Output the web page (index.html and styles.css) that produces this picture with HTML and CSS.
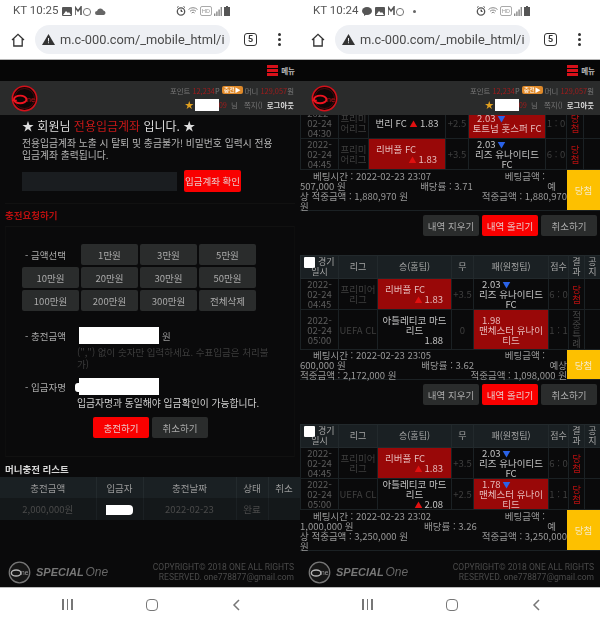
FILE: index.html
```html
<!DOCTYPE html>
<html lang="ko">
<head>
<meta charset="utf-8">
<title>Special One</title>
<link rel="stylesheet" href="styles.css">
</head>
<body>
<div class="screens">

<section class="phone">
  <header class="status">
    <span class="status-text">KT 10:25</span>
    <svg class="st-icon" width="10" height="9" viewBox="0 0 10 9"><rect width="10" height="9" rx="1" fill="#555"/><path d="M1 8l3-4 2 2 1-1 2 3z" fill="#fff"/></svg>
    <svg class="st-icon" width="17" height="10" viewBox="0 0 17 10"><path d="M0 9V1l3 4 3-4v8" fill="none" stroke="#555" stroke-width="1.6"/><circle cx="12" cy="6" r="3.6" fill="none" stroke="#777"/></svg>
    <svg class="st-icon" width="11" height="7" viewBox="0 0 11 7"><path d="M2 7a2 2 0 010-4 3.4 3.4 0 016.4-.6A2.4 2.4 0 019 7z" fill="#666"/></svg>
    <span class="status-right">
      <svg width="10" height="10" viewBox="0 0 10 10"><circle cx="5" cy="5.5" r="3.7" fill="none" stroke="#555" stroke-width="1.3"/><path d="M1 1.5L2.5.5M9 1.5L7.5.5M5 3.5v2h1.5" stroke="#555"/></svg>
      <svg width="10" height="8" viewBox="0 0 10 8"><path d="M.5 2.5a6.5 6.5 0 019 0M2 4.3a4.2 4.2 0 016 0M3.6 6a2 2 0 013 0" fill="none" stroke="#888"/></svg>
      <span class="hd">HD</span>
      <svg width="8" height="9" viewBox="0 0 8 9"><path d="M0 9h1.4V6.5H0zM2.2 9h1.4V4.5H2.2zM4.4 9h1.4V2.5H4.4zM6.6 9H8V0H6.6z" fill="#888"/></svg>
      <svg width="6" height="10" viewBox="0 0 6 10"><path d="M2 0h2v1h2v9H0V1h2z" fill="#555"/></svg>
    </span>
  </header>
  <div class="browser">
    <svg class="home" width="14" height="14" viewBox="0 0 14 14"><path d="M1 7l6-5.7L13 7M2.8 6v7h8.4V6" fill="none" stroke="#333" stroke-width="1.3"/></svg>
    <div class="url">
      <svg width="13" height="11" viewBox="0 0 13 11"><path d="M6.5 0L13 11H0z" fill="#333"/><path d="M6 4h1v3.500H6zM6 8.300h1v1H6z" fill="#eef0f4"/></svg>
      <span class="url-text">m.c-000.com/_mobile_html/i</span>
    </div>
    <span class="tabs">5</span>
    <span class="kebab"><i></i><i></i><i></i></span>
  </div>
  <main class="page">
    <div class="menubar">
      <span class="burger"><i></i><i></i><i></i></span>
      <span class="menu-text">메뉴</span>
    </div>
    <div class="userbar">
      <svg class="logo" width="27" height="27" viewBox="0 0 28 28">
        <circle cx="14" cy="14" r="12.6" fill="#120404" stroke="#d3111b" stroke-width="1.6"/>
        <circle cx="14" cy="14" r="10.4" fill="#0c0606" stroke="#5c0a10" stroke-width="0.8"/>
        <ellipse cx="9.5" cy="15" rx="6.5" ry="4" fill="none" stroke="#ee1420" stroke-width="2"/>
        <path d="M1 16h5" stroke="#ee1420" stroke-width="1.5"/>
        <text x="16" y="18" class="logo-ne">ne</text>
      </svg>
      <div class="userinfo">
        <div class="userline">포인트 <em>12,234</em>P <b class="charge">충전▶</b> 머니 <em>129,057</em>원</div>
        <div class="userline"><span class="star">★</span><span class="mask"></span><em class="uid">09</em> 님 &nbsp; 쪽지() &nbsp;<strong>로그아웃</strong></div>
      </div>
    </div>

    <div class="notice">
      <p class="notice-title">★ 회원님 <em>전용입금계좌</em> 입니다. ★</p>
      <p class="notice-text">전용입금계좌 노출 시 탈퇴 및 충금불가! 비밀번호 입력시 전용 입금계좌 출력됩니다.</p>
      <div class="account-row">
        <span class="account-input"></span>
        <span class="btn red account-btn">입금계좌 확인</span>
      </div>
    </div>

    <h2 class="section-title red-title">충전요청하기</h2>
    <div class="panel">
      <div class="amounts">
        <span class="field-label">- 금액선택</span>
        <span class="btn">1만원</span><span class="btn">3만원</span><span class="btn">5만원</span>
        <span class="btn">10만원</span><span class="btn">20만원</span><span class="btn">30만원</span><span class="btn">50만원</span>
        <span class="btn">100만원</span><span class="btn">200만원</span><span class="btn">300만원</span><span class="btn">전체삭제</span>
      </div>
      <div class="field amount-field">
        <span class="field-label">- 충전금액</span>
        <span class="white-input"></span>
        <span class="unit">원</span>
      </div>
      <p class="help">(",") 없이 숫자만 입력하세요. 수표입금은 처리불가)</p>
      <div class="field name-field">
        <span class="field-label">- 입금자명</span>
        <span class="white-input blob"></span>
      </div>
      <p class="name-note">입금자명과 동일해야 입금확인이 가능합니다.</p>
      <div class="form-actions">
        <span class="btn red">충전하기</span>
        <span class="btn">취소하기</span>
      </div>
    </div>

    <h2 class="section-title white-title">머니충전 리스트</h2>
    <table class="list">
      <colgroup><col class="l1"><col class="l2"><col class="l3"><col class="l4"><col class="l5"></colgroup>
      <thead><tr><th>충전금액</th><th>입금자</th><th>충전날짜</th><th>상태</th><th>취소</th></tr></thead>
      <tbody><tr><td>2,000,000원</td><td><span class="mask list-mask"></span></td><td>2022-02-23</td><td>완료</td><td></td></tr></tbody>
    </table>

    <footer class="foot">
      <svg class="foot-logo" width="23" height="23" viewBox="0 0 24 24">
        <circle cx="12" cy="12" r="10.7" fill="#161616" stroke="#777" stroke-width="1.3"/>
        <ellipse cx="8.5" cy="12.5" rx="5" ry="3.2" fill="none" stroke="#b5b5b5" stroke-width="1.5"/>
        <text x="13.5" y="15" class="logo-ne grey">ne</text>
      </svg>
      <span class="foot-brand">SPECIAL <i>One</i></span>
      <p class="copyright">COPYRIGHT© 2018 ONE ALL RIGHTS<br>RESERVED. one778877@gmail.com</p>
    </footer>
  </main>
  <nav class="softkeys">
    <span class="recent"><i></i><i></i><i></i></span>
    <span class="homekey"></span>
    <svg width="8" height="12" viewBox="0 0 8 12"><path d="M7 1L2 6l5 5" fill="none" stroke="#777" stroke-width="1.5"/></svg>
  </nav>
</section>

<section class="phone">
  <header class="status">
    <span class="status-text">KT 10:24</span>
    <svg class="st-icon" width="10" height="9" viewBox="0 0 10 9"><ellipse cx="5" cy="4" rx="5" ry="4" fill="#555"/><path d="M2 6v3l3-2z" fill="#555"/></svg>
    <svg class="st-icon" width="10" height="9" viewBox="0 0 10 9"><rect width="10" height="9" rx="1" fill="#555"/><path d="M1 8l3-4 2 2 1-1 2 3z" fill="#fff"/></svg>
    <svg class="st-icon" width="17" height="10" viewBox="0 0 17 10"><path d="M0 9V1l3 4 3-4v8" fill="none" stroke="#555" stroke-width="1.6"/><circle cx="12" cy="6" r="3.6" fill="none" stroke="#777"/></svg>
    <span class="dot"></span>
    <span class="status-right">
      <svg width="10" height="10" viewBox="0 0 10 10"><circle cx="5" cy="5.5" r="3.7" fill="none" stroke="#555" stroke-width="1.3"/><path d="M1 1.5L2.5.5M9 1.5L7.5.5M5 3.5v2h1.5" stroke="#555"/></svg>
      <svg width="10" height="8" viewBox="0 0 10 8"><path d="M.5 2.5a6.5 6.5 0 019 0M2 4.3a4.2 4.2 0 016 0M3.6 6a2 2 0 013 0" fill="none" stroke="#888"/></svg>
      <span class="hd">HD</span>
      <svg width="8" height="9" viewBox="0 0 8 9"><path d="M0 9h1.4V6.5H0zM2.2 9h1.4V4.5H2.2zM4.4 9h1.4V2.5H4.4zM6.6 9H8V0H6.6z" fill="#888"/></svg>
      <svg width="6" height="10" viewBox="0 0 6 10"><path d="M2 0h2v1h2v9H0V1h2z" fill="#555"/></svg>
    </span>
  </header>
  <div class="browser">
    <svg class="home" width="14" height="14" viewBox="0 0 14 14"><path d="M1 7l6-5.7L13 7M2.8 6v7h8.4V6" fill="none" stroke="#333" stroke-width="1.3"/></svg>
    <div class="url">
      <svg width="13" height="11" viewBox="0 0 13 11"><path d="M6.5 0L13 11H0z" fill="#333"/><path d="M6 4h1v3.500H6zM6 8.300h1v1H6z" fill="#eef0f4"/></svg>
      <span class="url-text">m.c-000.com/_mobile_html/i</span>
    </div>
    <span class="tabs">5</span>
    <span class="kebab"><i></i><i></i><i></i></span>
  </div>
  <main class="page">
    <div class="menubar">
      <span class="burger"><i></i><i></i><i></i></span>
      <span class="menu-text">메뉴</span>
    </div>
    <div class="userbar">
      <svg class="logo" width="27" height="27" viewBox="0 0 28 28">
        <circle cx="14" cy="14" r="12.6" fill="#120404" stroke="#d3111b" stroke-width="1.6"/>
        <circle cx="14" cy="14" r="10.4" fill="#0c0606" stroke="#5c0a10" stroke-width="0.8"/>
        <ellipse cx="9.5" cy="15" rx="6.5" ry="4" fill="none" stroke="#ee1420" stroke-width="2"/>
        <path d="M1 16h5" stroke="#ee1420" stroke-width="1.5"/>
        <text x="16" y="18" class="logo-ne">ne</text>
      </svg>
      <div class="userinfo">
        <div class="userline">포인트 <em>12,234</em>P <b class="charge">충전▶</b> 머니 <em>129,057</em>원</div>
        <div class="userline"><span class="star">★</span><span class="mask"></span><em class="uid">09</em> 님 &nbsp; 쪽지() &nbsp;<strong>로그아웃</strong></div>
      </div>
    </div>

    <div class="history">
      <table class="bets clipped">
        <colgroup><col class="c-date"><col class="c-lg-s"><col class="c-home-s"><col class="c-draw-s"><col class="c-away-s"><col class="c-score"><col class="c-res-s"><col class="c-not-s"></colgroup>
        <tbody>
          <tr class="r31">
            <td class="date">2022-<br>02-24<br>04:30</td><td class="league">프리미<br>어리그</td>
            <td class="team">번리 FC <span class="up">▲</span> 1.83</td><td class="draw">+2.5</td>
            <td class="team win"><span class="odds-line">2.03 <span class="down">▼</span></span><br>토트넘 홋스퍼 FC</td><td class="score">1 : 0</td><td class="result">당<br>첨</td><td></td>
          </tr>
          <tr class="r31">
            <td class="date">2022-<br>02-24<br>04:45</td><td class="league">프리미<br>어리그</td>
            <td class="team win"><span class="home-name">리버풀 FC</span><span class="home-odds"><span class="up">▲</span> 1.83</span></td><td class="draw">+3.5</td>
            <td class="team"><span class="odds-line">2.03 <span class="down">▼</span></span><br>리즈 유나이티드<br>FC</td><td class="score">6 : 0</td><td class="result">당<br>첨</td><td></td>
          </tr>
        </tbody>
      </table>
      <div class="info info4">
        <div class="info-text">
          <div class="info-line pad-r"><span class="indent">베팅시간 : 2022-02-23 23:07</span><span>베팅금액 :</span></div>
          <div class="info-line pad-s"><span>507,000 원</span><span>배당률 : 3.71</span><span>예</span></div>
          <div class="info-line"><span>상 적중금액 : 1,880,970 원</span><span>적중금액 : 1,880,970</span></div>
          <div class="info-line"><span>원</span></div>
        </div>
        <span class="won">당첨</span>
      </div>
      <div class="actions">
        <span class="btn">내역 지우기</span><span class="btn red">내역 올리기</span><span class="btn">취소하기</span>
      </div>

      <table class="bets">
        <colgroup><col class="c-date"><col class="c-lg"><col class="c-home"><col class="c-draw"><col class="c-away"><col class="c-score-n"><col class="c-res"><col class="c-not"></colgroup>
        <thead>
          <tr class="r23"><th class="first-th"><span class="check"></span> 경기<br>일시</th><th>리그</th><th>승(홈팀)</th><th>무</th><th>패(원정팀)</th><th>점수</th><th>결<br>과</th><th>공<br>지</th></tr>
        </thead>
        <tbody>
          <tr class="r31">
            <td class="date">2022-<br>02-24<br>04:45</td><td class="league">프리미어<br>리그</td>
            <td class="team win"><span class="home-name">리버풀 FC</span><span class="home-odds"><span class="up">▲</span> 1.83</span></td><td class="draw">+3.5</td>
            <td class="team"><span class="odds-line">2.03 <span class="down">▼</span></span><br>리즈 유나이티드<br>FC</td><td class="score">6 : 0</td><td class="result">당<br>첨</td><td></td>
          </tr>
          <tr class="r40">
            <td class="date">2022-<br>02-24<br>05:00</td><td class="league">UEFA CL</td>
            <td class="team">아틀레티코 마드<br>리드<span class="home-odds">1.88</span></td><td class="draw">0</td>
            <td class="team win"><span class="odds-line">1.98</span><br>맨체스터 유나이<br>티드</td><td class="score">1 : 1</td><td class="result"><span class="dim">적<br>중<br>특<br>례</span></td><td></td>
          </tr>
        </tbody>
      </table>
      <div class="info info3">
        <div class="info-text">
          <div class="info-line pad-r"><span class="indent">베팅시간 : 2022-02-23 23:05</span><span>베팅금액 :</span></div>
          <div class="info-line"><span>600,000 원</span><span>배당률 : 3.62</span><span>예상</span></div>
          <div class="info-line"><span>적중금액 : 2,172,000 원</span><span>적중금액 : 1,098,000 원</span></div>
        </div>
        <span class="won">당첨</span>
      </div>
      <div class="actions">
        <span class="btn">내역 지우기</span><span class="btn red">내역 올리기</span><span class="btn">취소하기</span>
      </div>

      <table class="bets">
        <colgroup><col class="c-date"><col class="c-lg"><col class="c-home"><col class="c-draw"><col class="c-away"><col class="c-score-n"><col class="c-res"><col class="c-not"></colgroup>
        <thead>
          <tr class="r23"><th class="first-th"><span class="check"></span> 경기<br>일시</th><th>리그</th><th>승(홈팀)</th><th>무</th><th>패(원정팀)</th><th>점수</th><th>결<br>과</th><th>공<br>지</th></tr>
        </thead>
        <tbody>
          <tr class="r31">
            <td class="date">2022-<br>02-24<br>04:45</td><td class="league">프리미어<br>리그</td>
            <td class="team win"><span class="home-name">리버풀 FC</span><span class="home-odds"><span class="up">▲</span> 1.83</span></td><td class="draw">+3.5</td>
            <td class="team"><span class="odds-line">2.03 <span class="down">▼</span></span><br>리즈 유나이티드<br>FC</td><td class="score">6 : 0</td><td class="result">당<br>첨</td><td></td>
          </tr>
          <tr class="r31">
            <td class="date">2022-<br>02-24<br>05:00</td><td class="league">UEFA CL</td>
            <td class="team">아틀레티코 마드<br>리드<span class="home-odds"><span class="up">▲</span> 2.08</span></td><td class="draw">+2.5</td>
            <td class="team win"><span class="odds-line">1.78 <span class="down">▼</span></span><br>맨체스터 유나이<br>티드</td><td class="score">1 : 1</td><td class="result">당<br>첨</td><td></td>
          </tr>
        </tbody>
      </table>
      <div class="info info4">
        <div class="info-text">
          <div class="info-line pad-r"><span class="indent">베팅시간 : 2022-02-23 23:02</span><span>베팅금액 :</span></div>
          <div class="info-line pad-s"><span>1,000,000 원</span><span>배당률 : 3.26</span><span>예</span></div>
          <div class="info-line"><span>상 적중금액 : 3,250,000 원</span><span>적중금액 : 3,250,000</span></div>
          <div class="info-line"><span>원</span></div>
        </div>
        <span class="won">당첨</span>
      </div>
    </div>

    <footer class="foot">
      <svg class="foot-logo" width="23" height="23" viewBox="0 0 24 24">
        <circle cx="12" cy="12" r="10.7" fill="#161616" stroke="#777" stroke-width="1.3"/>
        <ellipse cx="8.5" cy="12.5" rx="5" ry="3.2" fill="none" stroke="#b5b5b5" stroke-width="1.5"/>
        <text x="13.5" y="15" class="logo-ne grey">ne</text>
      </svg>
      <span class="foot-brand">SPECIAL <i>One</i></span>
      <p class="copyright">COPYRIGHT© 2018 ONE ALL RIGHTS<br>RESERVED. one778877@gmail.com</p>
    </footer>
  </main>
  <nav class="softkeys">
    <span class="recent"><i></i><i></i><i></i></span>
    <span class="homekey"></span>
    <svg width="8" height="12" viewBox="0 0 8 12"><path d="M7 1L2 6l5 5" fill="none" stroke="#777" stroke-width="1.5"/></svg>
  </nav>
</section>

</div>
</body>
</html>
```
FILE: styles.css
```css
* { box-sizing: border-box; }
html, body { margin: 0; padding: 0; background: #fff; }
body { font-family: "Noto Sans CJK KR", "Noto Sans", sans-serif; overflow: hidden; }
p, h2 { margin: 0; }
em { font-style: normal; }
.logo-ne { font: 8px "Liberation Sans", sans-serif; fill: #a81019; }
.logo-ne.grey { font-size: 7px; fill: #999; }

.screens { display: flex; width: 600px; height: 623px; filter: blur(0.45px); }
.phone { width: 300px; height: 623px; display: flex; flex-direction: column; overflow: hidden; }

/* status bar */
.status { height: 20px; padding: 2px 70px 0 13px; display: flex; align-items: center; gap: 3px; flex: none; }
.status-text { font: 11.5px/1 "Roboto", sans-serif; color: #555; margin-right: 1px; }
.st-icon { flex: none; }
.dot { width: 3px; height: 3px; border-radius: 50%; background: #666; margin-left: 5px; }
.status-right { margin-left: auto; display: flex; align-items: center; gap: 2px; }
.hd { font: 6px/8px "Roboto", sans-serif; color: #999; border: 1px solid #aaa; border-radius: 2px; padding: 0 1px; }

/* browser bar */
.browser { height: 40px; flex: none; display: flex; align-items: center; padding: 0 0 0 11px; border-bottom: 1px solid #b5b5b5; }
.home { flex: none; }
.url { width: 195px; height: 29px; margin-left: 10px; background: #eef0f4; border-radius: 15px; display: flex; align-items: center; padding-left: 7px; gap: 5px; overflow: hidden; flex: none; }
.url svg { flex: none; }
.url-text { font: 12.8px/1.2 "Roboto", sans-serif; color: #4a4a4a; white-space: nowrap; width: 164px; overflow: hidden; }
.tabs { width: 13px; height: 13px; margin-left: 14px; border: 1.5px solid #333; border-radius: 3px; font: bold 9px/10px "Roboto", sans-serif; color: #333; text-align: center; flex: none; }
.kebab { margin-left: 21px; display: flex; flex-direction: column; gap: 2px; }
.kebab i { width: 3px; height: 3px; border-radius: 50%; background: #333; display: block; }

/* dark page */
.page { flex: 1; min-height: 0; background: #0a0a0b; display: flex; flex-direction: column; overflow: hidden; }
.menubar { height: 21px; background: #060606; display: flex; align-items: center; justify-content: flex-end; padding-right: 5px; gap: 3px; flex: none; }
.burger { display: flex; flex-direction: column; gap: 1px; }
.burger i { width: 11px; height: 3px; background: #d8111a; display: block; }
.menu-text { font-size: 7.5px; font-weight: 700; color: #bbb; line-height: 10px; }
.userbar { height: 34px; background: #2a2b2b; display: flex; align-items: center; padding: 0 6px 0 11px; flex: none; }
.logo { flex: none; }
.userinfo { margin-left: auto; display: flex; flex-direction: column; gap: 4px; }
.userline { font-size: 7.4px; line-height: 9px; color: #777; display: flex; justify-content: flex-end; align-items: center; white-space: pre; }
.userline em { color: #a01c1c; }
.uid { margin-right: 2px; }
.userline strong { color: #ddd; font-weight: 700; }
.charge { background: #e08a2a; color: #fff; font-size: 6px; font-weight: 400; border-radius: 2px; padding: 0 2px; line-height: 8px; }
.star { color: #e0a020; font-size: 9px; margin-right: 1px; }
.mask { display: inline-block; width: 24px; height: 12px; background: #fff; }

/* notice */
.notice { height: 89px; border-bottom: 1px solid #111; margin: 0 5px; padding: 2px 17px 0; flex: none; }
.notice-title { font-size: 12px; line-height: 17px; color: #ddd; }
.notice-title em { color: #c81818; }
.notice-text { font-size: 9.8px; line-height: 12px; color: #b5b5b5; margin-top: 3px; }
.account-row { display: flex; align-items: center; margin-top: 9px; gap: 7px; }
.account-input { width: 155px; height: 19px; background: #1a1d20; }

/* buttons */
.btn { height: 21px; background: #2a2c2c; border-radius: 2px; color: #aaa; font-size: 9.5px; display: flex; align-items: center; justify-content: center; white-space: nowrap; }
.btn.red { background: #f90000; color: #e8c8c8; }
.account-btn { width: 57px; height: 22px; flex: none; }

.section-title { font-size: 9.5px; font-weight: 700; line-height: 12px; padding-left: 5px; }
.red-title { color: #b80f0f; margin-top: 5px; }
.white-title { color: #d8d8d8; margin-top: 6px; }

.panel { margin: 5px 5px 0; border: 1px solid #0e0e0e; border-top-color: #111; border-bottom-color: #111; height: 231px; padding-top: 17px; flex: none; }
.field-label { color: #aaa; font-size: 9.5px; padding-left: 3px; }
.amounts { display: grid; grid-template-columns: repeat(4, 57px); column-gap: 2px; row-gap: 2px; padding-left: 16px; }
.amounts .field-label { align-self: center; }
.field { display: flex; align-items: center; padding-left: 19px; height: 17px; }
.field .field-label { width: 54px; padding-left: 0; flex: none; }
.amount-field { margin-top: 16px; }
.white-input { width: 80px; height: 17px; background: #fff; }
.blob { position: relative; }
.blob::before { content: ""; position: absolute; left: -4px; top: 5px; width: 8px; height: 9px; background: #fff; border-radius: 3px; }
.unit { color: #999; font-size: 9.5px; margin-left: 3px; }
.help { font-size: 9.5px; line-height: 12px; color: #3d3d3d; padding: 0 22px 0 71px; margin-top: 2px; }
.name-field { margin-top: 8px; }
.name-note { font-size: 9.8px; line-height: 12px; color: #cfcfcf; padding-left: 71px; margin-top: 2px; }
.form-actions { display: flex; gap: 3px; padding-left: 87px; margin-top: 8px; }
.form-actions .btn { width: 56px; }

/* deposit list */
.list { width: 300px; border-collapse: collapse; table-layout: fixed; margin-top: 2px; flex: none; }
.l1 { width: 96px; } .l2 { width: 47px; } .l3 { width: 93px; } .l4 { width: 32px; } .l5 { width: 32px; }
.list th { height: 21px; background: #1a2023; color: #999; font-size: 9.5px; font-weight: 400; padding: 0; border-right: 1px solid #232a2d; }
.list td { height: 22px; background: #14181a; color: #4a4a4a; font-size: 9.5px; text-align: center; padding: 0; border-right: 1px solid #1b2023; }
.list-mask { width: 27px; height: 10px; vertical-align: middle; border-radius: 0 4px 4px 0; }

/* footer */
.foot { margin-top: auto; height: 30px; display: flex; align-items: center; padding: 0 6px 0 8px; flex: none; }
.foot-logo { flex: none; }
.foot-brand { font: italic 700 11px/1 "Liberation Sans", sans-serif; color: #777; margin-left: 5px; white-space: nowrap; word-spacing: -1px; }
.foot-brand i { font-weight: 400; color: #666; font-size: 12px; }
.copyright { margin-left: auto; font: 8.5px/10px "Roboto", sans-serif; color: #4a4a4a; text-align: right; white-space: nowrap; }

/* soft keys */
.softkeys { height: 36px; flex: none; background: #fff; border-top: 1px solid #bbb; display: flex; align-items: center; justify-content: space-between; padding: 0 60px 2px 62px; }
.recent { display: flex; gap: 3px; }
.recent i { width: 1.5px; height: 11px; background: #777; display: block; }
.homekey { width: 12px; height: 12px; border: 1.5px solid #777; border-radius: 4px; }

/* right history */
.history { flex: 1; min-height: 0; overflow: hidden; }
.bets { width: 300px; border-collapse: collapse; table-layout: fixed; }
.clipped { margin-top: -8px; }
.c-date { width: 38px; }
.c-lg-s { width: 30px; } .c-home-s { width: 77px; } .c-draw-s { width: 23px; } .c-away-s { width: 77px; }
.c-score { width: 21px; } .c-res-s { width: 17px; } .c-not-s { width: 17px; }
.c-lg { width: 39px; } .c-home { width: 74px; } .c-draw { width: 22px; } .c-away { width: 75px; }
.c-score-n { width: 20px; } .c-res { width: 16px; } .c-not { width: 16px; }
.bets th { background: #1a2023; color: #a5a5a5; font-size: 9px; line-height: 10px; font-weight: 400; padding: 0; border: 1px solid #22292c; overflow: hidden; }
.first-th { white-space: nowrap; }
.check { display: inline-block; width: 11px; height: 9px; background: #fff; border-radius: 1px; vertical-align: top; box-shadow: 0 2px 0 #fff; }
.bets td { border: 1px solid #1b2124; padding: 0; text-align: center; font-size: 9.5px; line-height: 10px; color: #bbb; overflow: hidden; }
.r23 { height: 23px; } .r31 { height: 31px; } .r40 { height: 40px; }
.bets .date { color: #5c5c5c; }
.bets .league { color: #3f3f3f; }
.bets .draw, .bets .score { color: #3f3f3f; }
.bets .result { color: #b51010; }
.bets .team { color: #c4c4c4; }
.bets .win { background: #990808; color: #e6bcbc; }
.dim { color: #444; display: block; line-height: 9.5px; }
.up { color: #e01010; font-size: 8px; line-height: 0; }
.down { color: #2a62e8; font-size: 8px; line-height: 0; }
.odds-line { display: inline-block; width: 100%; height: 10px; text-align: left; padding-left: 8px; vertical-align: top; }
.home-name { display: block; text-align: left; padding-left: 7px; }
.home-odds { display: block; text-align: right; padding-right: 8px; height: 10px; }

.info { display: flex; border-bottom: 1px solid #1b2124; }
.info4 { height: 41px; }
.info3 { height: 30px; }
.info-text { flex: 1; min-width: 0; font-size: 9.5px; line-height: 10px; color: #999; padding-top: 1px; }
.info3 .info-text { padding-top: 0; }
.info-line { display: flex; justify-content: space-between; height: 10px; white-space: nowrap; }
.pad-r { padding-right: 22px; }
.pad-s { padding-right: 11px; }
.indent { padding-left: 13px; }
.won { width: 33px; flex: none; background: #fdc000; color: #f5e8c0; font-size: 9.5px; display: flex; align-items: center; justify-content: center; }

.actions { display: flex; justify-content: flex-end; gap: 3px; padding: 4px 3px 0 0; height: 44px; }
.actions .btn { width: 56px; height: 21px; }
```
